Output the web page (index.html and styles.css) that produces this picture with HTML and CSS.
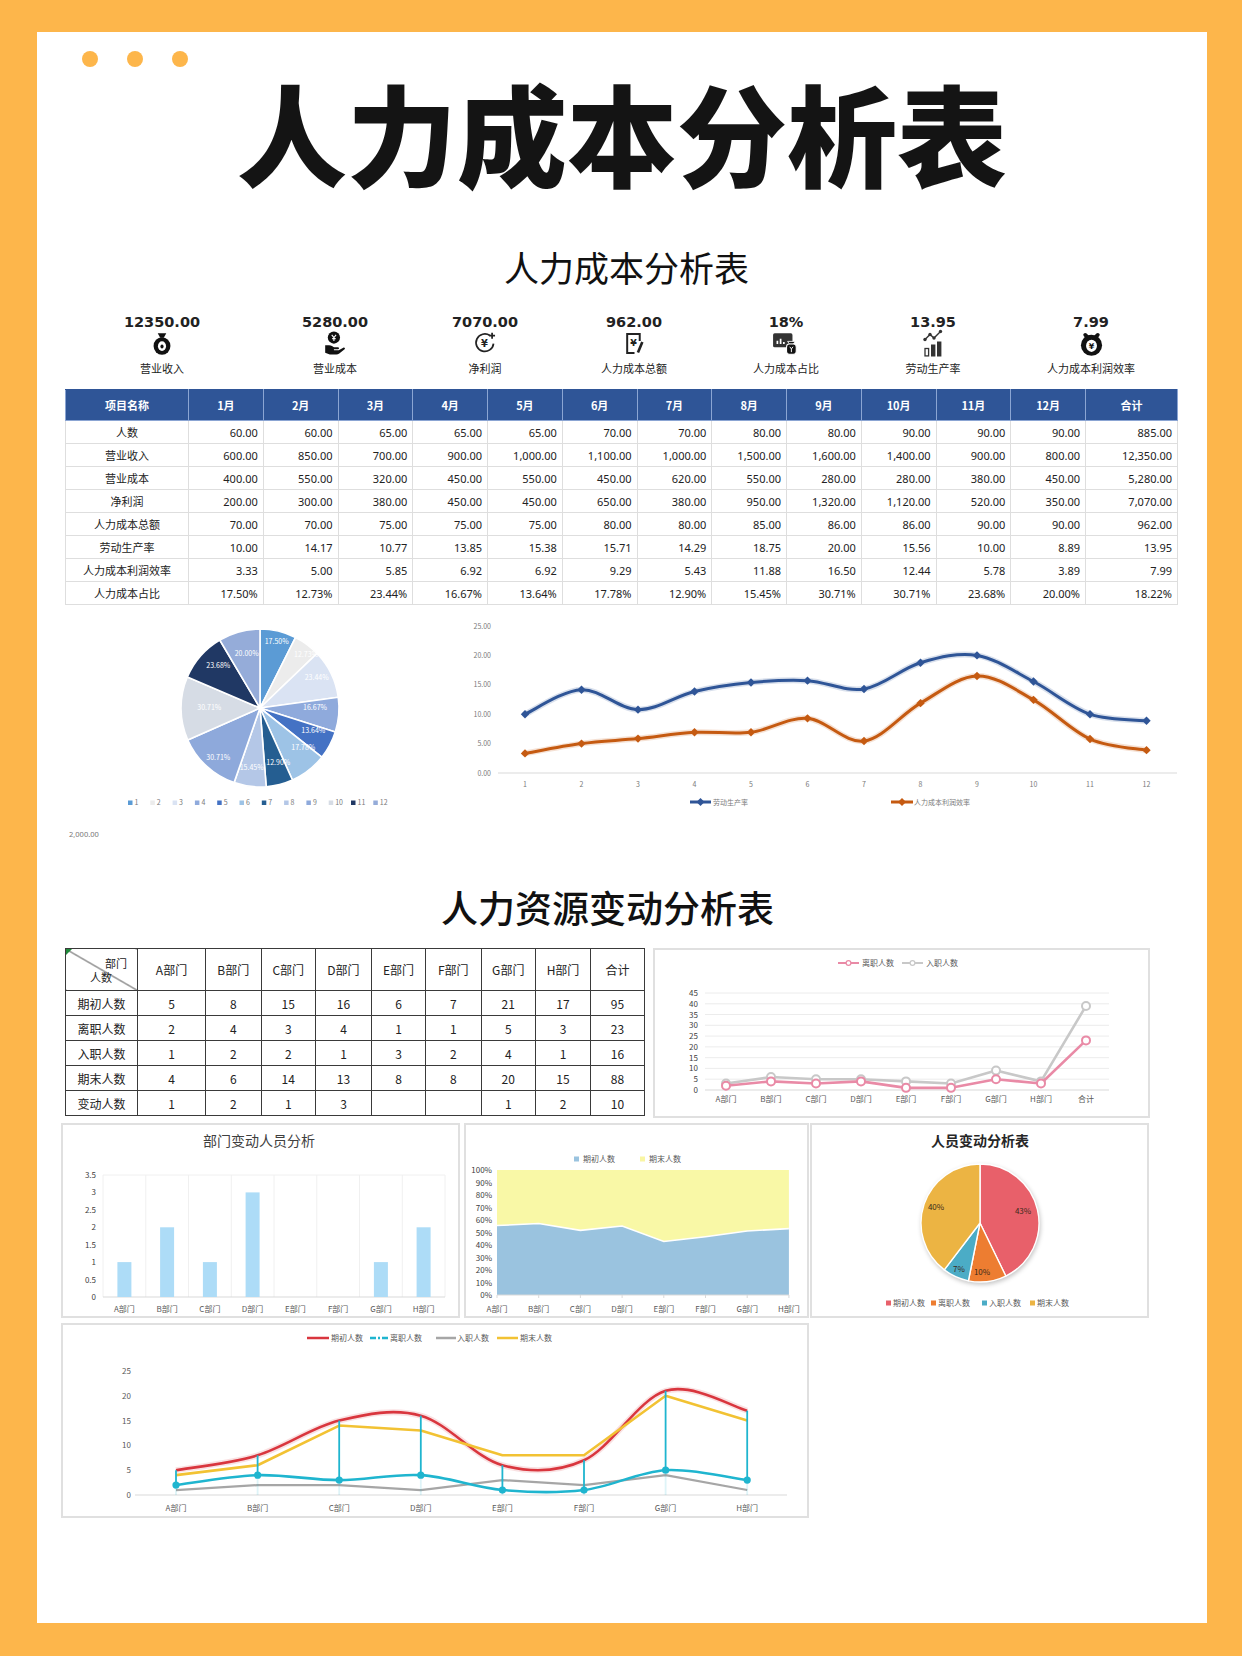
FILE: index.html
```html
<!DOCTYPE html>
<html lang="zh-CN">
<head>
<meta charset="utf-8">
<title>人力成本分析表</title>
<link rel="stylesheet" href="styles.css">
</head>
<body>
<div class="panel">
  <div class="dots"><span class="dot"></span><span class="dot"></span><span class="dot"></span></div>
  <h1 class="hero">人力成本分析表</h1>
  <h2 class="subtitle">人力成本分析表</h2>

  <div class="kpis">
    <div class="kpi">
      <div class="kpi-value">12350.00</div>
      <div class="kpi-icon">
        <svg viewBox="0 0 16 20" width="18" height="23"><path d="M4.2 .8h7.6l-2.2 4h-3.2z" fill="#111"/><ellipse cx="8" cy="12.2" rx="7.5" ry="7.8" fill="#111"/><ellipse cx="8" cy="12.4" rx="3.6" ry="4.3" fill="#fff"/><ellipse cx="8" cy="12.6" rx="1.4" ry="1.8" fill="#111"/></svg>
      </div>
      <div class="kpi-label">营业收入</div>
    </div>
    <div class="kpi">
      <div class="kpi-value">5280.00</div>
      <div class="kpi-icon">
        <svg viewBox="0 0 20 22" width="22" height="24"><circle cx="9" cy="6" r="5.6" fill="#111"/><path d="M7 3.6l2 2.4 2-2.4M9 6v3.2M7.4 7h3.2" stroke="#fff" stroke-width="1" fill="none"/><path d="M1 13h3.5c2.2 0 3.6 1 4.6 2h3.6c1.3 0 1.3 1.8 0 1.8H9v.9h4.4l4.2-2.4c1.1-.6 2.1.7 1.2 1.5l-4.9 3.8c-.8.6-1.7.9-2.7.9H5.2L1 20z" fill="#111"/></svg>
      </div>
      <div class="kpi-label">营业成本</div>
    </div>
    <div class="kpi">
      <div class="kpi-value">7070.00</div>
      <div class="kpi-icon">
        <svg viewBox="0 0 22 22" width="24" height="24"><path d="M15.5 4.2A8 8 0 1 0 18.8 11.5" fill="none" stroke="#222" stroke-width="1.6"/><path d="M17.5 1.5v5.5M14.8 4.2h5.4" stroke="#222" stroke-width="1.6"/><text x="10.4" y="15" class="ico-txt" text-anchor="middle">¥</text></svg>
      </div>
      <div class="kpi-label">净利润</div>
    </div>
    <div class="kpi">
      <div class="kpi-value">962.00</div>
      <div class="kpi-icon">
        <svg viewBox="0 0 20 22" width="21" height="23"><path d="M15 8.5V2H3v18h7" fill="none" stroke="#222" stroke-width="1.9"/><text x="9" y="13.5" class="ico-txt" text-anchor="middle">¥</text><path d="M17.5 9.5l-4.2 10" stroke="#222" stroke-width="2.5"/></svg>
      </div>
      <div class="kpi-label">人力成本总额</div>
    </div>
    <div class="kpi">
      <div class="kpi-value">18%</div>
      <div class="kpi-icon">
        <svg viewBox="0 0 26 24" width="28" height="26"><rect x="1" y="3" width="18" height="13" rx="1.5" fill="#333"/><path d="M5 13v-3M8 13v-5M11 13v-2" stroke="#fff" stroke-width="1.6"/><path d="M14.5 10.5h7l-1.8 2.6h-3.4z" fill="#111" stroke="#fff" stroke-width=".8"/><rect x="13.5" y="13" width="9" height="9.5" rx="2.6" fill="#111" stroke="#fff" stroke-width="1"/><path d="M16.5 15.5l1.5 2 1.5-2M18 17.5v3" stroke="#fff" stroke-width=".9" fill="none"/></svg>
      </div>
      <div class="kpi-label">人力成本占比</div>
    </div>
    <div class="kpi">
      <div class="kpi-value">13.95</div>
      <div class="kpi-icon">
        <svg viewBox="0 0 20 28" width="20" height="29"><polyline points="2,10 7,5 11,8.5 17.5,2" fill="none" stroke="#333" stroke-width="1.4"/><circle cx="2" cy="10" r="1.7" fill="#333"/><circle cx="7" cy="5" r="1.7" fill="#333"/><circle cx="11" cy="8.5" r="1.7" fill="#333"/><circle cx="17.5" cy="2" r="1.7" fill="#333"/><rect x="2" y="19" width="3.6" height="7.4" fill="none" stroke="#333" stroke-width="1.3"/><rect x="8" y="15" width="4.4" height="12" fill="#333"/><rect x="14" y="12" width="4.4" height="15" fill="#333"/></svg>
      </div>
      <div class="kpi-label">劳动生产率</div>
    </div>
    <div class="kpi">
      <div class="kpi-value">7.99</div>
      <div class="kpi-icon">
        <svg viewBox="0 0 22 22" width="25" height="25"><path d="M5.5 3.5l3 3M16.5 3.5l-3 3" stroke="#111" stroke-width="3.4" stroke-linecap="round"/><circle cx="11" cy="12.5" r="9.3" fill="#111"/><ellipse cx="11" cy="13" rx="4.8" ry="5.4" fill="#fff"/><text x="11" y="15.6" class="ico-txt small" text-anchor="middle">¥</text></svg>
      </div>
      <div class="kpi-label">人力成本利润效率</div>
    </div>
  </div>

  <table class="cost-table">
    <colgroup>
      <col class="c-name"><col class="c-m"><col class="c-m"><col class="c-m"><col class="c-m"><col class="c-m"><col class="c-m"><col class="c-m"><col class="c-m"><col class="c-m"><col class="c-m"><col class="c-m"><col class="c-m"><col class="c-total">
    </colgroup>
    <thead>
      <tr><th>项目名称</th><th>1月</th><th>2月</th><th>3月</th><th>4月</th><th>5月</th><th>6月</th><th>7月</th><th>8月</th><th>9月</th><th>10月</th><th>11月</th><th>12月</th><th>合计</th></tr>
    </thead>
    <tbody>
      <tr><td>人数</td><td>60.00</td><td>60.00</td><td>65.00</td><td>65.00</td><td>65.00</td><td>70.00</td><td>70.00</td><td>80.00</td><td>80.00</td><td>90.00</td><td>90.00</td><td>90.00</td><td>885.00</td></tr>
      <tr><td>营业收入</td><td>600.00</td><td>850.00</td><td>700.00</td><td>900.00</td><td>1,000.00</td><td>1,100.00</td><td>1,000.00</td><td>1,500.00</td><td>1,600.00</td><td>1,400.00</td><td>900.00</td><td>800.00</td><td>12,350.00</td></tr>
      <tr><td>营业成本</td><td>400.00</td><td>550.00</td><td>320.00</td><td>450.00</td><td>550.00</td><td>450.00</td><td>620.00</td><td>550.00</td><td>280.00</td><td>280.00</td><td>380.00</td><td>450.00</td><td>5,280.00</td></tr>
      <tr><td>净利润</td><td>200.00</td><td>300.00</td><td>380.00</td><td>450.00</td><td>450.00</td><td>650.00</td><td>380.00</td><td>950.00</td><td>1,320.00</td><td>1,120.00</td><td>520.00</td><td>350.00</td><td>7,070.00</td></tr>
      <tr><td>人力成本总额</td><td>70.00</td><td>70.00</td><td>75.00</td><td>75.00</td><td>75.00</td><td>80.00</td><td>80.00</td><td>85.00</td><td>86.00</td><td>86.00</td><td>90.00</td><td>90.00</td><td>962.00</td></tr>
      <tr><td>劳动生产率</td><td>10.00</td><td>14.17</td><td>10.77</td><td>13.85</td><td>15.38</td><td>15.71</td><td>14.29</td><td>18.75</td><td>20.00</td><td>15.56</td><td>10.00</td><td>8.89</td><td>13.95</td></tr>
      <tr><td>人力成本利润效率</td><td>3.33</td><td>5.00</td><td>5.85</td><td>6.92</td><td>6.92</td><td>9.29</td><td>5.43</td><td>11.88</td><td>16.50</td><td>12.44</td><td>5.78</td><td>3.89</td><td>7.99</td></tr>
      <tr><td>人力成本占比</td><td>17.50%</td><td>12.73%</td><td>23.44%</td><td>16.67%</td><td>13.64%</td><td>17.78%</td><td>12.90%</td><td>15.45%</td><td>30.71%</td><td>30.71%</td><td>23.68%</td><td>20.00%</td><td>18.22%</td></tr>
    </tbody>
  </table>

  <div class="chart-row">
    <svg class="pie1" width="400" height="210" viewBox="0 0 400 210">
      <g id="pie1"></g>
      <g class="pie-lbl">
        <text x="219.7" y="31.2">17.50%</text>
        <text x="249" y="43.5">12.73%</text>
        <text x="259.7" y="67.2">23.44%</text>
        <text x="258" y="97.2">16.67%</text>
        <text x="256.3" y="119.5">13.64%</text>
        <text x="246.3" y="137.2">17.78%</text>
        <text x="221.3" y="152.2">12.90%</text>
        <text x="194.7" y="157.2">15.45%</text>
        <text x="161.3" y="147.2">30.71%</text>
        <text x="152.3" y="97.2">30.71%</text>
        <text x="161.3" y="54.8">23.68%</text>
        <text x="189.7" y="43.2">20.00%</text>
      </g>
      <g id="pie1-legend" class="lg7"></g>
    </svg>
    <svg class="line1" width="740" height="210" viewBox="0 0 740 210">
      <g class="ax7 end">
        <text x="34" y="15.5">25.00</text>
        <text x="34" y="44.9">20.00</text>
        <text x="34" y="74.3">15.00</text>
        <text x="34" y="103.7">10.00</text>
        <text x="34" y="133.1">5.00</text>
        <text x="34" y="162.5">0.00</text>
      </g>
      <line x1="41" y1="160" x2="720" y2="160" class="axis"/>
      <g class="ax7 mid">
        <text x="68" y="173.5">1</text><text x="124.5" y="173.5">2</text><text x="181" y="173.5">3</text><text x="237.5" y="173.5">4</text><text x="294" y="173.5">5</text><text x="350.5" y="173.5">6</text><text x="407" y="173.5">7</text><text x="463.5" y="173.5">8</text><text x="520" y="173.5">9</text><text x="576.5" y="173.5">10</text><text x="633" y="173.5">11</text><text x="689.5" y="173.5">12</text>
      </g>
      <g id="line1"></g>
      <line x1="233" y1="189" x2="254" y2="189" stroke="#2f5597" stroke-width="3"/>
      <path d="M243.5 185 L247.5 189 L243.5 193 L239.5 189 Z" fill="#2f5597"/>
      <text x="256" y="191.5" class="ax7">劳动生产率</text>
      <line x1="434" y1="189" x2="456" y2="189" stroke="#c55a11" stroke-width="3"/>
      <path d="M445 185 L449 189 L445 193 L441 189 Z" fill="#c55a11"/>
      <text x="457" y="191.5" class="ax7">人力成本利润效率</text>
    </svg>
  </div>
  <div class="axis-stub">2,000.00</div>

  <h2 class="section-title">人力资源变动分析表</h2>

  <div class="hr-row">
    <table class="hr-table">
      <colgroup>
        <col class="h0"><col class="h1"><col class="h2"><col class="h3"><col class="h4"><col class="h5"><col class="h6"><col class="h7"><col class="h8"><col class="h9">
      </colgroup>
      <thead>
        <tr>
          <th class="diag"><span class="diag-top">部门</span><span class="diag-bottom">人数</span></th>
          <th>A部门</th><th>B部门</th><th>C部门</th><th>D部门</th><th>E部门</th><th>F部门</th><th>G部门</th><th>H部门</th><th>合计</th>
        </tr>
      </thead>
      <tbody>
        <tr><td>期初人数</td><td>5</td><td>8</td><td>15</td><td>16</td><td>6</td><td>7</td><td>21</td><td>17</td><td>95</td></tr>
        <tr><td>离职人数</td><td>2</td><td>4</td><td>3</td><td>4</td><td>1</td><td>1</td><td>5</td><td>3</td><td>23</td></tr>
        <tr><td>入职人数</td><td>1</td><td>2</td><td>2</td><td>1</td><td>3</td><td>2</td><td>4</td><td>1</td><td>16</td></tr>
        <tr><td>期末人数</td><td>4</td><td>6</td><td>14</td><td>13</td><td>8</td><td>8</td><td>20</td><td>15</td><td>88</td></tr>
        <tr><td>变动人数</td><td>1</td><td>2</td><td>1</td><td>3</td><td></td><td></td><td>1</td><td>2</td><td>10</td></tr>
      </tbody>
    </table>

    <div class="box box-line2">
      <svg width="493" height="166" viewBox="2 2 493 166">
        <line x1="185" y1="15" x2="206" y2="15" stroke="#e98aa6" stroke-width="2"/>
        <circle cx="195.5" cy="15" r="2.4" fill="#fff" stroke="#e98aa6" stroke-width="1.2"/>
        <text x="209" y="18" class="ct8">离职人数</text>
        <line x1="249" y1="15" x2="270" y2="15" stroke="#c8c8c8" stroke-width="2"/>
        <circle cx="259.5" cy="15" r="2.4" fill="#fff" stroke="#c8c8c8" stroke-width="1.2"/>
        <text x="273" y="18" class="ct8">入职人数</text>
        <g class="grid">
          <line x1="52" y1="45" x2="456" y2="45"/><line x1="52" y1="55.8" x2="456" y2="55.8"/><line x1="52" y1="66.5" x2="456" y2="66.5"/><line x1="52" y1="77.3" x2="456" y2="77.3"/><line x1="52" y1="88.1" x2="456" y2="88.1"/><line x1="52" y1="98.9" x2="456" y2="98.9"/><line x1="52" y1="109.7" x2="456" y2="109.7"/><line x1="52" y1="120.4" x2="456" y2="120.4"/><line x1="52" y1="131.2" x2="456" y2="131.2"/>
        </g>
        <line x1="52" y1="142" x2="456" y2="142" class="axis"/>
        <g class="ct8 dark end">
          <text x="45" y="145">0</text><text x="45" y="134.2">5</text><text x="45" y="123.4">10</text><text x="45" y="112.7">15</text><text x="45" y="101.9">20</text><text x="45" y="91.1">25</text><text x="45" y="80.3">30</text><text x="45" y="69.5">35</text><text x="45" y="58.8">40</text><text x="45" y="48">45</text>
        </g>
        <g class="ct8 mid">
          <text x="73" y="154">A部门</text><text x="118" y="154">B部门</text><text x="163" y="154">C部门</text><text x="208" y="154">D部门</text><text x="253" y="154">E部门</text><text x="298" y="154">F部门</text><text x="343" y="154">G部门</text><text x="388" y="154">H部门</text><text x="433" y="154">合计</text>
        </g>
        <g id="line2"></g>
      </svg>
    </div>
  </div>

  <div class="box-row">
    <div class="box box-bar">
      <svg width="395" height="191" viewBox="2 2 395 191">
        <text x="198" y="23" class="chart-title">部门变动人员分析</text>
        <g class="grid-v">
          <line x1="42" y1="52" x2="42" y2="174"/><line x1="84.75" y1="52" x2="84.75" y2="174"/><line x1="127.5" y1="52" x2="127.5" y2="174"/><line x1="170.25" y1="52" x2="170.25" y2="174"/><line x1="213" y1="52" x2="213" y2="174"/><line x1="255.75" y1="52" x2="255.75" y2="174"/><line x1="298.5" y1="52" x2="298.5" y2="174"/><line x1="341.25" y1="52" x2="341.25" y2="174"/><line x1="384" y1="52" x2="384" y2="174"/>
          <line x1="42" y1="52" x2="384" y2="52"/>
        </g>
        <line x1="42" y1="174" x2="384" y2="174" class="axis"/>
        <g class="ct8 dark end">
          <text x="35" y="177">0</text><text x="35" y="159.6">0.5</text><text x="35" y="142.1">1</text><text x="35" y="124.7">1.5</text><text x="35" y="107.3">2</text><text x="35" y="89.9">2.5</text><text x="35" y="72.4">3</text><text x="35" y="55">3.5</text>
        </g>
        <g class="bars">
          <rect x="56.4" y="139.1" width="14" height="34.9"/>
          <rect x="99.1" y="104.3" width="14" height="69.7"/>
          <rect x="141.9" y="139.1" width="14" height="34.9"/>
          <rect x="184.6" y="69.4" width="14" height="104.6"/>
          <rect x="312.9" y="139.1" width="14" height="34.9"/>
          <rect x="355.6" y="104.3" width="14" height="69.7"/>
        </g>
        <g class="ct8 mid">
          <text x="63.4" y="189">A部门</text><text x="106.1" y="189">B部门</text><text x="148.9" y="189">C部门</text><text x="191.6" y="189">D部门</text><text x="234.4" y="189">E部门</text><text x="277.1" y="189">F部门</text><text x="319.9" y="189">G部门</text><text x="362.6" y="189">H部门</text>
        </g>
      </svg>
    </div>
    <div class="box box-area">
      <svg width="341" height="191" viewBox="2 2 341 191">
        <rect x="110" y="33.5" width="5" height="5" fill="#9ac3df"/>
        <text x="119" y="39" class="ct8">期初人数</text>
        <rect x="176" y="33.5" width="5" height="5" fill="#f9f6a3"/>
        <text x="185" y="39" class="ct8">期末人数</text>
        <g id="area"></g>
        <line x1="33" y1="172" x2="325" y2="172" class="axis"/>
        <g class="ct8 dark end">
          <text x="28" y="175">0%</text><text x="28" y="162.5">10%</text><text x="28" y="150">20%</text><text x="28" y="137.5">30%</text><text x="28" y="125">40%</text><text x="28" y="112.5">50%</text><text x="28" y="100">60%</text><text x="28" y="87.5">70%</text><text x="28" y="75">80%</text><text x="28" y="62.5">90%</text><text x="28" y="50">100%</text>
        </g>
        <g class="ct8 mid">
          <text x="33" y="189">A部门</text><text x="74.7" y="189">B部门</text><text x="116.4" y="189">C部门</text><text x="158.1" y="189">D部门</text><text x="199.8" y="189">E部门</text><text x="241.5" y="189">F部门</text><text x="283.2" y="189">G部门</text><text x="324.9" y="189">H部门</text>
        </g>
      </svg>
    </div>
    <div class="box box-pie">
      <svg width="335" height="191" viewBox="2 2 335 191">
        <text x="170" y="23" class="chart-title bold">人员变动分析表</text>
        <g id="pie2" class="pie-shadow"></g>
        <g class="ct8 darker mid">
          <text x="213" y="91">43%</text>
          <text x="172" y="152">10%</text>
          <text x="149" y="149">7%</text>
          <text x="126" y="87">40%</text>
        </g>
        <rect x="76" y="177.5" width="5" height="5" fill="#e8606a"/><text x="83" y="183" class="ct8">期初人数</text>
        <rect x="121" y="177.5" width="5" height="5" fill="#ed7d31"/><text x="128" y="183" class="ct8">离职人数</text>
        <rect x="172" y="177.5" width="5" height="5" fill="#4bacc6"/><text x="179" y="183" class="ct8">入职人数</text>
        <rect x="220" y="177.5" width="5" height="5" fill="#ecb443"/><text x="227" y="183" class="ct8">期末人数</text>
      </svg>
    </div>
  </div>

  <div class="box box-bottom">
    <svg width="744" height="191" viewBox="2 2 744 191">
      <line x1="246" y1="15" x2="268" y2="15" stroke="#d9363e" stroke-width="2.5"/>
      <text x="270" y="18" class="ct8">期初人数</text>
      <line x1="309" y1="15" x2="328" y2="15" stroke="#1fb5cf" stroke-width="2.5" stroke-dasharray="6 2 2 2"/>
      <text x="329" y="18" class="ct8">离职人数</text>
      <line x1="375" y1="15" x2="395" y2="15" stroke="#a6a6a6" stroke-width="2.5"/>
      <text x="396" y="18" class="ct8">入职人数</text>
      <line x1="436" y1="15" x2="457" y2="15" stroke="#f2c233" stroke-width="2.5"/>
      <text x="459" y="18" class="ct8">期末人数</text>
      <line x1="74" y1="172" x2="726" y2="172" class="axis"/>
      <g class="ct8 end">
        <text x="70" y="175">0</text><text x="70" y="150.2">5</text><text x="70" y="125.4">10</text><text x="70" y="100.6">15</text><text x="70" y="75.8">20</text><text x="70" y="51">25</text>
      </g>
      <g class="ct8 mid">
        <text x="115" y="188">A部门</text><text x="196.6" y="188">B部门</text><text x="278.2" y="188">C部门</text><text x="359.8" y="188">D部门</text><text x="441.4" y="188">E部门</text><text x="523" y="188">F部门</text><text x="604.6" y="188">G部门</text><text x="686.2" y="188">H部门</text>
      </g>
      <g id="bottom"></g>
    </svg>
  </div>
</div>
<script src="script.js"></script>
</body>
</html>
```

FILE: styles.css
```css
* { box-sizing: border-box; }
html, body { margin: 0; padding: 0; }
body {
  width: 1242px;
  height: 1656px;
  overflow: hidden;
  background: #fdb64b;
  padding: 32px 35px 33px 37px;
  font-family: "Noto Sans CJK SC", "Noto Sans", sans-serif;
  color: #222;
}
.panel {
  width: 1170px;
  height: 1591px;
  background: #fff;
  overflow: hidden;
}

/* header */
.dots { display: flex; gap: 29px; padding: 19px 0 0 45px; }
.dot { width: 16px; height: 16px; border-radius: 50%; background: #fdb64b; }
.hero {
  margin: 9px 0 0;
  height: 110px;
  font-size: 110px;
  line-height: 110px;
  font-weight: 900;
  text-align: center;
  color: #141414;
}
.subtitle {
  margin: 63px 0 0;
  padding-left: 9px;
  height: 35px;
  font-size: 35px;
  line-height: 35px;
  font-weight: 400;
  text-align: center;
  color: #111;
}

/* KPI strip */
.kpis {
  display: grid;
  grid-template-columns: 194px 152px 148px 150px 154px 140px 176px;
  margin: 30px 0 0 28px;
}
.kpi { display: flex; flex-direction: column; align-items: center; }
.kpi-value {
  height: 16px;
  line-height: 16px;
  font-family: "DejaVu Sans", sans-serif;
  font-weight: 700;
  font-size: 14.5px;
  color: #222;
}
.kpi-icon { height: 26px; display: flex; align-items: center; justify-content: center; }
.kpi-icon svg { display: block; overflow: visible; }
.ico-txt { font-family: "DejaVu Sans", sans-serif; font-size: 9px; font-weight: 700; fill: #222; }
.ico-txt.small { font-size: 7px; fill: #111; }
.kpi-label { margin-top: 5px; height: 14px; line-height: 14px; font-size: 11px; color: #222; }

/* cost table */
.cost-table {
  margin: 14px 0 0 28px;
  width: 1112px;
  border-collapse: collapse;
  table-layout: fixed;
  font-family: "Noto Sans", "Noto Sans CJK SC", sans-serif;
  font-size: 11px;
}
.c-name { width: 123px; }
.c-m { width: 74.75px; }
.c-total { width: 92px; }
.cost-table th {
  height: 31px;
  padding: 0;
  background: #2f5597;
  color: #fff;
  font-family: "Noto Sans CJK SC", sans-serif;
  font-weight: 700;
  font-size: 11px;
  border: 1px solid #8ba5d3;
  border-top-color: #2f5597;
}
.cost-table td {
  height: 23px;
  padding: 0 5px 0 0;
  border: 1px solid #dedede;
  text-align: right;
  color: #222;
  line-height: 1;
}
.cost-table td:first-child {
  text-align: center;
  padding: 0;
  font-family: "Noto Sans CJK SC", sans-serif;
}

/* first chart row */
.chart-row { display: flex; margin-top: 8px; padding-left: 20px; height: 210px; }
.chart-row svg { display: block; }
.pie-lbl text { font-size: 7px; fill: #fff; text-anchor: middle; }
.lg7 text, .ax7 { font-size: 7px; fill: #7a7a7a; }
.ax7 text { font-size: 7px; fill: #7a7a7a; }
.end text, text.end { text-anchor: end; }
.mid text, text.mid { text-anchor: middle; }
.axis { stroke: #d9d9d9; stroke-width: 1; }
.axis-stub {
  margin-top: 6px;
  padding-left: 32px;
  height: 10px;
  line-height: 10px;
  font-size: 7.5px;
  color: #777;
  font-family: "Noto Sans", sans-serif;
}

/* section two */
.section-title {
  margin: 50px 0 0;
  padding-right: 29px;
  height: 37px;
  font-size: 37px;
  line-height: 37px;
  font-weight: 500;
  text-align: center;
  color: #111;
}
.hr-row { display: flex; align-items: flex-start; gap: 8px; margin: 22px 0 0 28px; }
.hr-table {
  width: 579px;
  border-collapse: collapse;
  table-layout: fixed;
  font-size: 12px;
  color: #222;
}
.h0 { width: 72px; } .h1 { width: 68px; } .h2 { width: 55.5px; } .h3 { width: 54.5px; }
.h4 { width: 56px; } .h5 { width: 54px; } .h6 { width: 55.5px; } .h7 { width: 54.5px; }
.h8 { width: 55px; } .h9 { width: 54px; }
.hr-table th, .hr-table td {
  border: 1.5px solid #3a3a3a;
  padding: 0;
  text-align: center;
  font-weight: 400;
}
.hr-table th { height: 42px; }
.hr-table td { height: 25px; }
.diag {
  position: relative;
  background: linear-gradient(to top right, transparent calc(50% - 0.8px), #333 50%, transparent calc(50% + 0.8px));
}
.diag::before {
  content: "";
  position: absolute;
  left: 0;
  top: 0;
  border-top: 6px solid #1f8a3a;
  border-right: 6px solid transparent;
}
.diag-top, .diag-bottom { display: block; font-size: 11px; line-height: 14px; }
.diag-top { text-align: right; padding-right: 10px; }
.diag-bottom { text-align: left; padding-left: 24px; }

.box { border: 2px solid #e0e0e0; background: #fff; }
.box svg { display: block; }
.box-line2 { width: 497px; height: 170px; }
.box-row { display: flex; margin: 5px 0 0 24px; }
.box-bar { width: 399px; height: 195px; }
.box-area { width: 345px; height: 195px; margin-left: 4px; }
.box-pie { width: 339px; height: 195px; margin-left: 1px; }
.box-bottom { width: 748px; height: 195px; margin: 5px 0 0 24px; }

.ct8 { font-size: 8px; fill: #595959; }
.ct8 text { font-size: 8px; fill: #595959; }
.ct8.dark text { fill: #404040; }
.ct8.darker text { fill: #3a2a1a; }
.grid line { stroke: #ececec; stroke-width: 1; }
.grid-v line { stroke: #f0f0f0; stroke-width: 1; }
.bars rect { fill: #addcf7; }
.chart-title { font-size: 14px; fill: #404040; text-anchor: middle; }
.chart-title.bold { font-weight: 700; fill: #262626; }
.pie-shadow { filter: drop-shadow(1px 2px 2px rgba(0, 0, 0, 0.22)); }
```

FILE: script.js
```js
(function () {
  var NS = 'http://www.w3.org/2000/svg';
  function el(parent, tag, attrs) {
    var e = document.createElementNS(NS, tag);
    for (var k in attrs) e.setAttribute(k, attrs[k]);
    parent.appendChild(e);
    return e;
  }
  function f(n) { return Math.round(n * 100) / 100; }
  function smooth(pts) {
    var d = 'M' + f(pts[0][0]) + ',' + f(pts[0][1]);
    for (var i = 0; i < pts.length - 1; i++) {
      var p0 = pts[i - 1] || pts[i], p1 = pts[i], p2 = pts[i + 1], p3 = pts[i + 2] || p2;
      var c1x = p1[0] + (p2[0] - p0[0]) / 6, c1y = p1[1] + (p2[1] - p0[1]) / 6;
      var c2x = p2[0] - (p3[0] - p1[0]) / 6, c2y = p2[1] - (p3[1] - p1[1]) / 6;
      d += ' C' + f(c1x) + ',' + f(c1y) + ' ' + f(c2x) + ',' + f(c2y) + ' ' + f(p2[0]) + ',' + f(p2[1]);
    }
    return d;
  }
  function poly(pts) {
    return 'M' + pts.map(function (p) { return f(p[0]) + ',' + f(p[1]); }).join(' L');
  }
  function pts(xs, vals, fy) {
    return vals.map(function (v, i) { return [xs[i], fy(v)]; });
  }
  function pie(g, cx, cy, r, vals, colors, sw) {
    var total = vals.reduce(function (a, b) { return a + b; }, 0);
    var a0 = 0;
    vals.forEach(function (v, i) {
      var a1 = a0 + v / total * Math.PI * 2;
      var x0 = cx + r * Math.sin(a0), y0 = cy - r * Math.cos(a0);
      var x1 = cx + r * Math.sin(a1), y1 = cy - r * Math.cos(a1);
      var large = (a1 - a0) > Math.PI ? 1 : 0;
      el(g, 'path', {
        d: 'M' + cx + ',' + cy + ' L' + f(x0) + ',' + f(y0) + ' A' + r + ',' + r + ' 0 ' + large + ' 1 ' + f(x1) + ',' + f(y1) + ' Z',
        fill: colors[i], stroke: '#fff', 'stroke-width': sw, 'stroke-linejoin': 'round'
      });
      a0 = a1;
    });
  }
  function range(n, a, step) { var r = []; for (var i = 0; i < n; i++) r.push(a + i * step); return r; }

  /* ---- pie 1 ---- */
  var pieColors = ['#5b9bd5', '#ececec', '#dae3f3', '#8faadc', '#4472c4', '#9dc3e6', '#255e91', '#b4c7e7', '#8ea9db', '#d6dce5', '#203864', '#95acd9'];
  var pieVals = [17.50, 12.73, 23.44, 16.67, 13.64, 17.78, 12.90, 15.45, 30.71, 30.71, 23.68, 20.00];
  pie(document.getElementById('pie1'), 203, 95, 79, pieVals, pieColors, 1.6);
  var lg = document.getElementById('pie1-legend');
  for (var i = 0; i < 12; i++) {
    var x = 71 + i * 22.3;
    el(lg, 'rect', { x: x, y: 187.5, width: 4.5, height: 4.5, fill: pieColors[i] });
    var t = el(lg, 'text', { x: x + 6.5, y: 192.3 });
    t.textContent = String(i + 1);
  }

  /* ---- line 1 ---- */
  var g1 = document.getElementById('line1');
  var xs1 = range(12, 68, 56.5);
  var fy1 = function (v) { return 160 - v * 5.88; };
  var series1 = [
    { vals: [10, 14.17, 10.77, 13.85, 15.38, 15.71, 14.29, 18.75, 20, 15.56, 10, 8.89], color: '#2f5597' },
    { vals: [3.33, 5, 5.85, 6.92, 6.92, 9.29, 5.43, 11.88, 16.5, 12.44, 5.78, 3.89], color: '#c55a11' }
  ];
  series1.forEach(function (s) {
    var p = pts(xs1, s.vals, fy1);
    var d = smooth(p);
    el(g1, 'path', { d: d, fill: 'none', stroke: s.color, 'stroke-width': 6, 'stroke-opacity': 0.18, 'stroke-linecap': 'round' });
    el(g1, 'path', { d: d, fill: 'none', stroke: s.color, 'stroke-width': 3, 'stroke-linecap': 'round' });
    p.forEach(function (q) {
      el(g1, 'path', { d: 'M' + q[0] + ',' + f(q[1] - 4.2) + ' L' + f(q[0] + 4.2) + ',' + f(q[1]) + ' L' + q[0] + ',' + f(q[1] + 4.2) + ' L' + f(q[0] - 4.2) + ',' + f(q[1]) + ' Z', fill: s.color });
    });
  });

  /* ---- line 2 ---- */
  var g2 = document.getElementById('line2');
  var xs2 = range(9, 73, 45);
  var fy2 = function (v) { return 142 - v * 2.156; };
  var series2 = [
    { vals: [3, 6, 5, 5, 4, 3, 9, 4, 39], color: '#c8c8c8' },
    { vals: [2, 4, 3, 4, 1, 1, 5, 3, 23], color: '#e98aa6' }
  ];
  series2.forEach(function (s) {
    var p = pts(xs2, s.vals, fy2);
    el(g2, 'path', { d: poly(p), fill: 'none', stroke: s.color, 'stroke-width': 2.6, 'stroke-linejoin': 'round' });
    p.forEach(function (q) {
      el(g2, 'circle', { cx: q[0], cy: f(q[1]), r: 4, fill: '#fff', stroke: s.color, 'stroke-width': 2 });
    });
  });

  /* ---- area ---- */
  var ga = document.getElementById('area');
  var xsA = range(8, 33, 41.7);
  var ratios = [5 / 9, 8 / 14, 15 / 29, 16 / 29, 6 / 14, 7 / 15, 21 / 41, 17 / 32];
  var pa = pts(xsA, ratios, function (v) { return 172 - v * 125; });
  el(ga, 'path', { d: 'M33,47 L324.9,47 L' + pa.slice().reverse().map(function (q) { return f(q[0]) + ',' + f(q[1]); }).join(' L') + ' Z', fill: '#f9f8a6' });
  el(ga, 'path', { d: 'M33,172 L' + pa.map(function (q) { return f(q[0]) + ',' + f(q[1]); }).join(' L') + ' L324.9,172 Z', fill: '#9ac3df' });
  el(ga, 'path', { d: poly(pa), fill: 'none', stroke: '#fff', 'stroke-width': 1.6 });
  xsA.forEach(function (x) { el(ga, 'line', { x1: x, y1: 172, x2: x, y2: 175, stroke: '#d9d9d9' }); });

  /* ---- pie 2 ---- */
  pie(document.getElementById('pie2'), 170, 100, 59, [95, 23, 16, 88], ['#e8606a', '#ed7d31', '#4bacc6', '#ecb443'], 1.4);

  /* ---- bottom ---- */
  var gb = document.getElementById('bottom');
  var xsB = range(8, 115, 81.6);
  var fyB = function (v) { return 172 - v * 4.96; };
  var start = [5, 8, 15, 16, 6, 7, 21, 17];
  var leave = [2, 4, 3, 4, 1, 1, 5, 3];
  var join = [1, 2, 2, 1, 3, 2, 4, 1];
  var end = [4, 6, 14, 13, 8, 8, 20, 15];
  var pS = pts(xsB, start, fyB), pL = pts(xsB, leave, fyB), pJ = pts(xsB, join, fyB), pE = pts(xsB, end, fyB);
  el(gb, 'path', { d: poly(pJ), fill: 'none', stroke: '#a6a6a6', 'stroke-width': 2.2, 'stroke-linejoin': 'round' });
  el(gb, 'path', { d: smooth(pS), fill: 'none', stroke: '#d9363e', 'stroke-width': 6, 'stroke-opacity': 0.15 });
  el(gb, 'path', { d: smooth(pS), fill: 'none', stroke: '#d9363e', 'stroke-width': 2.6 });
  el(gb, 'path', { d: poly(pE), fill: 'none', stroke: '#f2c233', 'stroke-width': 2.6, 'stroke-linejoin': 'round' });
  pS.forEach(function (q, i) {
    el(gb, 'line', { x1: q[0], y1: f(q[1]), x2: q[0], y2: f(pL[i][1]), stroke: '#1fb5cf', 'stroke-width': 1.8 });
    el(gb, 'line', { x1: q[0], y1: f(pL[i][1]), x2: q[0], y2: 172, stroke: '#1fb5cf', 'stroke-width': 1.8, 'stroke-opacity': 0.15 });
  });
  el(gb, 'path', { d: smooth(pL), fill: 'none', stroke: '#1fb5cf', 'stroke-width': 2.6 });
  pL.forEach(function (q) { el(gb, 'circle', { cx: q[0], cy: f(q[1]), r: 3.6, fill: '#1fb5cf' }); });
})();
```
